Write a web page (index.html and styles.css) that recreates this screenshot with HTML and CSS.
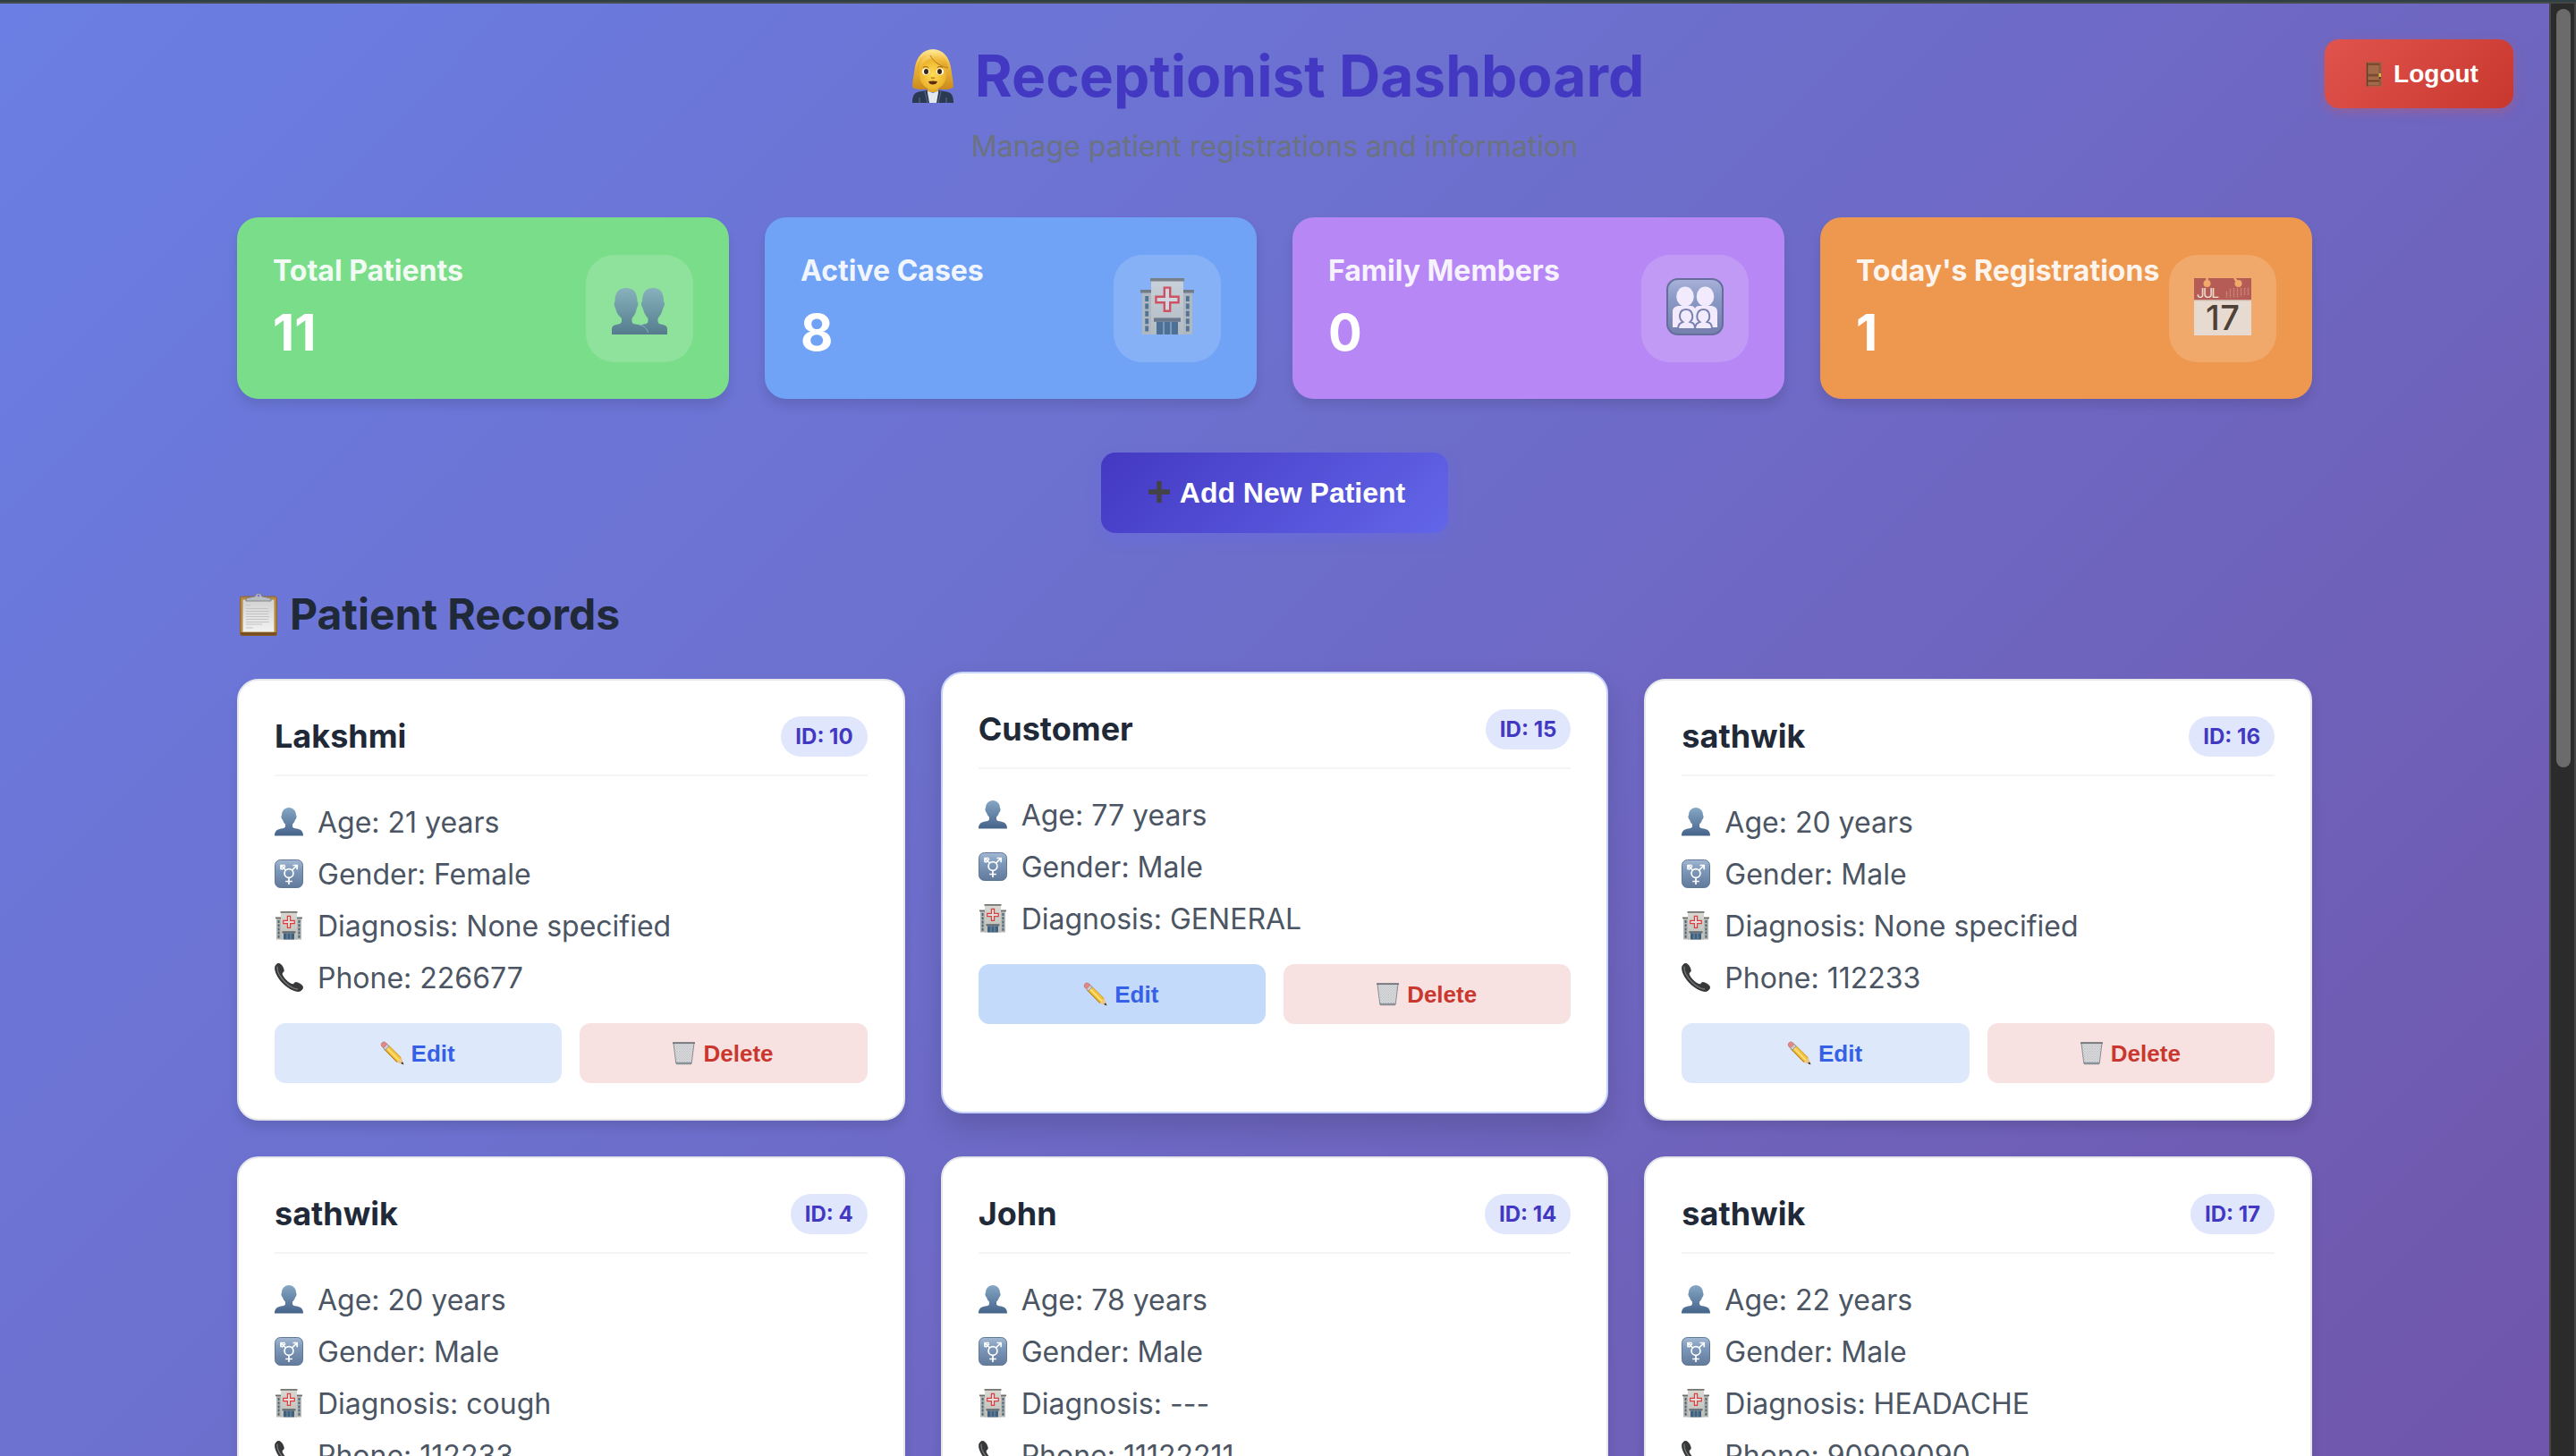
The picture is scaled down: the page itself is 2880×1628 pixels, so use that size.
FILE: index.html
```html
<!DOCTYPE html>
<html lang="en">
<head>
<meta charset="utf-8">
<title>Receptionist Dashboard</title>
<link rel="stylesheet" href="styles.css">
</head>
<body>
<svg class="sprite" aria-hidden="true">
  <defs>
    <linearGradient id="slate" x1="0" y1="0" x2="0" y2="1"><stop offset="0" stop-color="#86a7c5"/><stop offset="1" stop-color="#46638a"/></linearGradient>
    <linearGradient id="tile" x1="0" y1="0" x2="0" y2="1"><stop offset="0" stop-color="#a3b8d2"/><stop offset=".35" stop-color="#7f9abb"/><stop offset="1" stop-color="#62799a"/></linearGradient>
    <linearGradient id="wall" x1="0" y1="0" x2="0" y2="1"><stop offset="0" stop-color="#d9d9d4"/><stop offset="1" stop-color="#bdbdb8"/></linearGradient>
    <linearGradient id="hair" x1="0" y1="0" x2="0" y2="1"><stop offset="0" stop-color="#ffe794"/><stop offset=".4" stop-color="#efb93a"/><stop offset="1" stop-color="#c98a1c"/></linearGradient>
    <linearGradient id="paper" x1="0" y1="0" x2="0" y2="1"><stop offset="0" stop-color="#d2d2d2"/><stop offset="1" stop-color="#f2f2f2"/></linearGradient>
    <radialGradient id="skin"><stop offset="0" stop-color="#ffdc55"/><stop offset="1" stop-color="#edb32c"/></radialGradient>
    <pattern id="mesh" width="3" height="3" patternUnits="userSpaceOnUse"><path d="M0 0l3 3M3 0L0 3" stroke="#96989d" stroke-width=".5"/></pattern>
  </defs>
  <symbol id="person" viewBox="0 0 32 32">
    <path fill="url(#slate)" d="M16 0C20.700 0 24 3.600 24 8.500C24.600 9 24.800 10.200 24.300 11.500C24 12.700 23.600 13.300 23 13.600C22.400 16 21.200 17.600 20 18.600V21C20 22.800 22 23 25 23.600C29.500 24.500 32 26.500 32 31.500H0C0 26.500 2.500 24.500 7 23.600C10 23 12 22.800 12 21V18.600C10.800 17.600 9.600 16 9 13.600C8.400 13.300 8 12.700 7.700 11.500C7.200 10.200 7.400 9 8 8.500C8 3.600 11.300 0 16 0Z"/>
  </symbol>
  <symbol id="people" viewBox="0 0 62 52">
    <path fill="url(#slate)" d="M46 0C54 0 58 5 58 15C59.500 16 59.200 20 57.500 22C56 28 54 31 51.500 34V37C51.500 40 54 40.500 57 41C60.500 41.700 62 43 62 46V52H28V46C28 43 33 41 36 40.500C38 40 40.500 40 40.500 37V34C38 31 36 28 34.500 22C32.800 20 32.500 16 34 15C34 5 38 0 46 0Z"/>
    <path fill="url(#slate)" d="M16 0C24 0 28.500 5 28.500 15C30 16 29.700 20 28 22C27 28 25 31 22.500 34V37C22.500 40 25 40.500 30 41C36 42 40 46 40.500 52H0V46C0 43 1.500 41.700 5 41C8 40.500 11 40 11 37V34C8 31 5 28 4 22C2.300 20 2.500 16 3.500 15C3.500 5 8 0 16 0Z"/>
    <path d="M30 41C36 42 40 46 40.500 50" fill="none" stroke="#86a7c5"/>
  </symbol>
  <symbol id="gender" viewBox="0 0 32 32">
    <rect x=".5" y=".5" width="31" height="31" rx="6" fill="url(#tile)" stroke="#5f7898"/>
    <g fill="none" stroke="#fff" stroke-width="1.700"><circle cx="16" cy="15.500" r="4.900"/><path d="M16 20.400V28M12.200 24.500H19.800M19.500 12L25.200 6.500M20.500 6.500H25.200V11.200M12.500 12L7 6.500M7 11.200V6.500H11.700M8 11.500L12 7.500"/></g>
  </symbol>
  <symbol id="hospital" viewBox="0 0 32 32">
    <path fill="#b9b9b2" d="M2 7.500H9V31.500H2ZM23 7.500H30V31.500H23Z"/>
    <path fill="#6d6e6c" d="M1 6.500H9V8.200H1ZM23 6.500H31V8.200H23Z"/>
    <path fill="url(#wall)" d="M7 1.500H25V31.500H7Z"/>
    <path fill="#74756f" d="M6.500 0H25.500V1.800H6.500Z"/>
    <g stroke="#43647f" stroke-width="1.900" stroke-dasharray="3 1.200"><path d="M4.600 10V30.500M27.400 10V30.500"/></g>
    <path fill="#656b72" d="M8.500 22.200H23.500V24.400H8.500Z"/>
    <path fill="#3f617f" d="M10 24.400H22V31.500H10Z"/>
    <path d="M14 24.400V31.500M18 24.400V31.500" stroke="#8ba0b0" stroke-width=".8"/>
    <path fill="#e2dedc" stroke="#df3c3e" stroke-width="1.200" d="M14.400 5.300H17.600V10.400H22.300V13.600H17.600V18.400H14.400V13.600H9.700V10.400H14.400Z"/>
  </symbol>
  <symbol id="family" viewBox="0 0 64 64">
    <rect x="1" y="1" width="62" height="62" rx="12" fill="url(#tile)" stroke="#4d6285" stroke-width="2"/>
    <g fill="#fff"><ellipse cx="21" cy="20.500" rx="9.800" ry="11"/><ellipse cx="43.500" cy="20.500" rx="9.800" ry="11"/><path d="M7 55V38C7 33 10 31 15 31H27C30 31 31 32 32 34C33 32 34 31 37 31H49C54 31 57 33 57 38V55Z"/></g>
    <g fill="#fff" stroke="#667da0" stroke-width="2"><path d="M13 57C13 51 16 50 18.500 49C13 45 14 35 22 35C30 35 31 45 26.500 49C30 50 32 51 32 57Z"/><path d="M32 57C32 51 35 50 37.500 49C32 45 34 35 41.500 35C49 35 50 45 45.500 49C49 50 51 51 51 57Z"/></g>
    <path d="M12 58H52" stroke="#667da0" stroke-width="2.500"/>
  </symbol>
  <symbol id="phone" viewBox="0 0 32 32">
    <path fill="#37383a" stroke="#202123" stroke-width=".7" d="M5.500 .5C8 1.500 10 5 10.300 8.300C10.500 9.800 7.800 10.500 8.200 12C9.500 16.500 15.500 22.300 20 23.700C21.500 24.100 22 21.200 23.700 21.400C27 21.800 31 24 31.600 26.500C32 28.700 29.500 31.500 26.500 31.500C22 31.500 14.500 27.500 9.500 22.500C4 17 .5 10 .5 5.500C.5 2 3.500 -.3 5.500 .5Z"/>
    <path d="M3 3.500C2.500 9 6.500 16 11.500 21C16 25.500 22 28.700 26 29" fill="none" stroke="#77787a" stroke-width="1.300"/>
  </symbol>
  <symbol id="pencil" viewBox="0 0 28 28">
    <path fill="#f3c23c" d="M8.500 4L24.500 19.500L27 27L19.500 24.500L4 8.500Z"/>
    <path d="M6.500 6.500L22 22.500" stroke="#ffe27a" stroke-width="1.800"/><path d="M4.300 9L19.700 24.500" stroke="#b8801d" stroke-width="1.100"/><path d="M9 4.300L24.300 19.300" stroke="#c8902a" stroke-width=".9"/>
    <path fill="#ecc590" d="M24.500 19.500L27 27L19.500 24.500Z"/><path fill="#2c2a28" d="M26 24L27.500 27.500L24 26Z"/>
    <path fill="#c9ccd0" stroke="#7f858c" stroke-width=".7" d="M7 2.800L10.500 6L6 10.500L2.800 7Z"/>
    <path fill="#e58884" stroke="#b85e5c" stroke-width=".6" d="M2 6.300C-.5 3.500 3.500 -.8 6.300 1.800L8.200 3.500L3.700 8Z"/>
  </symbol>
  <symbol id="trash" viewBox="0 0 28 28">
    <path d="M2 2H26L23 26H5Z" fill="#e9eaec"/><path d="M2 2H26L23 26H5Z" fill="url(#mesh)" stroke="#85888d"/>
    <path d="M1 1.300H27V3.200H1Z" fill="#777a7f"/><path d="M4.800 24.500H23.200L22.800 27.300H5.200Z" fill="#8b9299"/>
  </symbol>
  <symbol id="door" viewBox="0 0 18 28">
    <rect x=".4" y=".4" width="17.200" height="27.200" fill="#8f5a3c" stroke="#b3604a" stroke-width=".8"/>
    <path fill="#a06a48" d="M2.500 4H14.500V13.500H2.500ZM2.500 17H14.500V20H2.500ZM2.500 23H14.500V26H2.500Z"/>
    <path d="M2.500 3H15M2.500 15H15M2.500 21.500H15M1.500 1V27.500" stroke="#633a25" stroke-width="1.200" fill="none"/>
    <rect x="14.500" y="13" width="2.500" height="4" fill="#dfb64c"/><rect x="15" y="17" width="1.500" height="2" fill="#4d3320"/>
  </symbol>
  <symbol id="clipboard" viewBox="0 0 42 48">
    <rect x=".5" y="4" width="41" height="43.500" rx="2" fill="#b58743" stroke="#8f6528"/><path fill="#7a5020" d="M1 44H41V47.500H1Z"/>
    <rect x="3.500" y="7.500" width="35" height="36" fill="url(#paper)"/>
    <path d="M7 13.500H12M7 17.500H32M7 20.500H33M7 23.500H32M7 26.500H33M7 29.500H32M7 32.500H33M7 35H25M7 39H15" stroke="#c4c4c4" stroke-width="1"/>
    <path fill="#b9bdc1" stroke="#73777c" stroke-width=".8" d="M7 9V6.500C10 4.500 15 5 17.500 3.500C18 -.5 24 -.5 24.500 3.500C27 5 32 4.500 35 6.500V9Z"/><circle cx="21" cy="3" r="1.300" fill="#777bce"/>
  </symbol>
  <symbol id="worker" viewBox="0 0 48 60">
    <path fill="url(#hair)" d="M24 0C35 0 43 9 44.500 23C45.500 31 47.500 38 46.500 43C42 45.500 34 45.500 29 44H19C14 45.500 6 45.500 1.500 43C.5 38 2.500 31 3.500 23C5 9 13 0 24 0Z"/>
    <path fill="#dfa729" d="M18 38H30V48H18Z"/>
    <path fill="#e3e8f0" d="M18 47L24 49L30 47L31 60H17Z"/>
    <path fill="#2b3a52" d="M17.500 46L20 60H1C1 52 3 48.500 9 47.500ZM30.500 46L28 60H47C47 52 45 48.500 39 47.500Z"/>
    <path d="M15 47L18 60M33 47L30 60M9 54V60M39 54V60" stroke="#53647f" stroke-width="1.200" fill="none"/>
    <ellipse cx="24" cy="28" rx="15" ry="17.500" fill="url(#skin)"/>
    <path fill="url(#hair)" d="M7 28C7 15 14 7 21 7C25 15 34 20 41 21C40 10 34 3 24 2C13 2 6 12 7 28Z"/>
    <path d="M21 7C25 15 34 20 41 21" fill="none" stroke="#b77a18"/>
    <path d="M13 20.500Q16 18.500 19 20.500M29 20.500Q32 18.500 35 20.500" fill="none" stroke="#a76f1b" stroke-width="1.200"/>
    <ellipse cx="16" cy="25" rx="4" ry="3.800" fill="#fff"/><ellipse cx="32" cy="25" rx="4" ry="3.800" fill="#fff"/>
    <ellipse cx="16.500" cy="25" rx="2.500" ry="3" fill="#3f2412"/><ellipse cx="31.500" cy="25" rx="2.500" ry="3" fill="#3f2412"/>
    <path d="M22 31.500Q24 33.500 26 31.500" fill="none" stroke="#bd8420" stroke-width="1.300"/>
    <path d="M19 36Q24 35 29 36Q28 39.500 24 39.500Q20 39.500 19 36Z" fill="#5d2a14"/>
  </symbol>
  <symbol id="plus" viewBox="0 0 24 24"><path fill="#434345" d="M9.300 0H14.700V9.300H24V14.700H14.700V24H9.300V14.700H0V9.300H9.300Z"/></symbol>
</svg>

<main class="page">
  <button class="logout"><svg><use href="#door"/></svg>Logout</button>
  <div class="container">
    <header class="header">
      <h1><svg><use href="#worker"/></svg>Receptionist Dashboard</h1>
      <p>Manage patient registrations and information</p>
    </header>

    <section class="stats">
      <div class="stat green"><div><h3>Total Patients</h3><p>11</p></div><span class="stat-icon"><svg class="i-people"><use href="#people"/></svg></span></div>
      <div class="stat blue"><div><h3>Active Cases</h3><p>8</p></div><span class="stat-icon"><svg><use href="#hospital"/></svg></span></div>
      <div class="stat purple"><div><h3>Family Members</h3><p>0</p></div><span class="stat-icon"><svg><use href="#family"/></svg></span></div>
      <div class="stat orange"><div><h3>Today's Registrations</h3><p>1</p></div><span class="stat-icon">
        <svg viewBox="0 0 64 64">
          <rect width="64" height="64" fill="#e6e8eb"/><rect width="64" height="24.500" fill="#a64a50"/>
          <path d="M0 25H64" stroke="#c8c8cc"/>
          <path d="M14.500 0V5M45 0L49 5" stroke="#f2b171" stroke-width="2.500"/>
          <circle cx="14.500" cy="6" r="4" fill="#f2ab6b"/><circle cx="49.500" cy="6" r="4" fill="#f2ab6b"/>
          <path d="M36.500 15V22M40.500 12V22M44.500 11V22M48.500 11V22M52.500 11V20M56.500 11V19M60.500 11V19" stroke="#c98587" stroke-width="1.500" stroke-dasharray="1.400 .7"/>
          <text class="cal-month" x="3" y="21.500" textLength="25">JUL</text>
          <text class="cal-day" x="13" y="57.500" textLength="38">17</text>
        </svg></span></div>
    </section>

    <button class="add"><svg><use href="#plus"/></svg>Add New Patient</button>

    <h2><svg><use href="#clipboard"/></svg>Patient Records</h2>

    <section class="cards">
      <article class="card">
        <div class="card-head"><h3>Lakshmi</h3><span class="id">ID: 10</span></div>
        <ul><li><svg><use href="#person"/></svg>Age: 21 years</li><li><svg><use href="#gender"/></svg>Gender: Female</li><li><svg><use href="#hospital"/></svg>Diagnosis: None specified</li><li><svg><use href="#phone"/></svg>Phone: 226677</li></ul>
        <div class="actions"><button class="edit"><svg><use href="#pencil"/></svg>Edit</button><button class="delete"><svg><use href="#trash"/></svg>Delete</button></div>
      </article>
      <article class="card hovered">
        <div class="card-head"><h3>Customer</h3><span class="id">ID: 15</span></div>
        <ul><li><svg><use href="#person"/></svg>Age: 77 years</li><li><svg><use href="#gender"/></svg>Gender: Male</li><li><svg><use href="#hospital"/></svg>Diagnosis: GENERAL</li></ul>
        <div class="actions"><button class="edit"><svg><use href="#pencil"/></svg>Edit</button><button class="delete"><svg><use href="#trash"/></svg>Delete</button></div>
      </article>
      <article class="card">
        <div class="card-head"><h3>sathwik</h3><span class="id">ID: 16</span></div>
        <ul><li><svg><use href="#person"/></svg>Age: 20 years</li><li><svg><use href="#gender"/></svg>Gender: Male</li><li><svg><use href="#hospital"/></svg>Diagnosis: None specified</li><li><svg><use href="#phone"/></svg>Phone: 112233</li></ul>
        <div class="actions"><button class="edit"><svg><use href="#pencil"/></svg>Edit</button><button class="delete"><svg><use href="#trash"/></svg>Delete</button></div>
      </article>
      <article class="card">
        <div class="card-head"><h3>sathwik</h3><span class="id">ID: 4</span></div>
        <ul><li><svg><use href="#person"/></svg>Age: 20 years</li><li><svg><use href="#gender"/></svg>Gender: Male</li><li><svg><use href="#hospital"/></svg>Diagnosis: cough</li><li><svg><use href="#phone"/></svg>Phone: 112233</li></ul>
      </article>
      <article class="card">
        <div class="card-head"><h3>John</h3><span class="id">ID: 14</span></div>
        <ul><li><svg><use href="#person"/></svg>Age: 78 years</li><li><svg><use href="#gender"/></svg>Gender: Male</li><li><svg><use href="#hospital"/></svg>Diagnosis: ---</li><li><svg><use href="#phone"/></svg>Phone: 11122211</li></ul>
      </article>
      <article class="card">
        <div class="card-head"><h3>sathwik</h3><span class="id">ID: 17</span></div>
        <ul><li><svg><use href="#person"/></svg>Age: 22 years</li><li><svg><use href="#gender"/></svg>Gender: Male</li><li><svg><use href="#hospital"/></svg>Diagnosis: HEADACHE</li><li><svg><use href="#phone"/></svg>Phone: 90909090</li></ul>
      </article>
    </section>
  </div>
</main>
<aside class="scrollbar"><div class="thumb"></div></aside>
</body>
</html>
```
FILE: styles.css
```css
* { box-sizing: border-box; margin: 0; padding: 0; }

body {
  display: flex;
  height: 1628px;
  overflow: hidden;
  border-top: 2px solid #2f4045;
  font-family: Inter, "Liberation Sans", sans-serif;
  color: #1f2937;
}

.sprite { position: absolute; width: 0; height: 0; }
svg { flex: none; display: block; }

.page {
  position: relative;
  flex: 1;
  height: 1626px;
  overflow: hidden;
  border-top: 2px solid #464b4c;
  background: linear-gradient(135deg, #6a7ee3 0%, #6d6fcd 42%, #7056ab 100%);
}

.container { width: 2320px; margin: 0 auto; padding-top: 40px; }

button {
  display: flex;
  align-items: center;
  justify-content: center;
  border: 0;
  font-family: "Liberation Sans", Arial, sans-serif;
  font-weight: 700;
}

.logout {
  position: absolute;
  top: 40px;
  right: 40px;
  width: 211px;
  height: 77px;
  gap: 13px;
  padding-left: 7px;
  border-radius: 16px;
  background: linear-gradient(135deg, #e0544d, #c8372e);
  box-shadow: 0 4px 12px rgba(224, 84, 77, .35);
  color: #fff;
  font-size: 28px;
}
.logout svg { width: 18px; height: 28px; }

.header { height: 199px; text-align: center; }
.header h1 {
  display: flex;
  justify-content: center;
  align-items: center;
  gap: 23px;
  padding-left: 7px;
  color: #4338c2;
  font-size: 64px;
  line-height: 82px;
  font-weight: 700;
}
.header h1 svg { width: 48px; height: 60px; }
.header p { margin-top: 18px; color: #6b7280; font-size: 32px; line-height: 39px; }

.stats { display: grid; grid-template-columns: repeat(4, 1fr); gap: 40px; }
.stat {
  display: flex;
  justify-content: space-between;
  align-items: center;
  height: 203px;
  padding: 0 40px;
  border-radius: 24px;
  box-shadow: 0 8px 12px rgba(0, 0, 0, .1);
  color: #fff;
}
.green { background: #7add8a; }
.blue { background: #70a2f5; }
.purple { background: #b687f5; }
.orange { background: #ee984f; }
.stat h3 { margin-bottom: 16px; font-size: 32px; line-height: 39px; font-weight: 700; opacity: .9; white-space: nowrap; }
.stat p { font-size: 56px; line-height: 68px; font-weight: 700; }
.stat-icon {
  display: flex;
  align-items: center;
  justify-content: center;
  flex: none;
  width: 120px;
  height: 120px;
  padding-bottom: 3px;
  border-radius: 32px;
  background: rgba(255, 255, 255, .16);
}
.stat-icon svg { width: 64px; height: 64px; opacity: .8; }
.stat-icon .i-people { width: 62px; height: 52px; margin-top: 10px; }
.cal-month { font-size: 15px; fill: #eee; }
.cal-day { font-size: 38px; font-weight: 500; fill: #27282c; }

.add {
  width: 388px;
  height: 90px;
  margin: 60px auto 0;
  gap: 11px;
  padding-left: 5px;
  border-radius: 16px;
  background: linear-gradient(135deg, #4338c2, #6366e9);
  box-shadow: 0 8px 16px rgba(99, 102, 241, .3);
  color: #fff;
  font-size: 32px;
}
.add svg { width: 24px; height: 24px; margin-bottom: 3px; }

h2 {
  display: flex;
  align-items: center;
  gap: 14px;
  margin: 62px 0 43px 3px;
  font-size: 48px;
  line-height: 58px;
  font-weight: 700;
}
h2 svg { width: 42px; height: 48px; }

.cards { display: grid; grid-template-columns: repeat(3, 1fr); grid-auto-rows: 494px; gap: 40px; }
.card {
  padding: 40px;
  border: 2px solid #e5e7eb;
  border-radius: 24px;
  background: #fff;
  box-shadow: 0 8px 12px rgba(0, 0, 0, .1);
}
.card.hovered {
  transform: translateY(-8px);
  border-color: #c7d2fa;
  box-shadow: 0 16px 32px rgba(0, 0, 0, .14);
}
.card-head {
  display: flex;
  align-items: center;
  justify-content: space-between;
  height: 67px;
  padding-bottom: 20px;
  border-bottom: 2px solid #f3f4f6;
}
.card-head h3 { margin-bottom: 2px; font-size: 36px; line-height: 44px; font-weight: 700; }
.id {
  padding: 8px 16px;
  border-radius: 24px;
  background: #e0e7fd;
  color: #4338c2;
  font-size: 24px;
  line-height: 29px;
  font-weight: 700;
}
.card ul { display: grid; gap: 16px; margin: 30px 0; list-style: none; }
.card li { display: flex; align-items: center; gap: 16px; height: 42px; color: #4b5563; font-size: 32px; }
.card li svg { width: 32px; height: 32px; margin-bottom: 1px; }

.actions { display: grid; grid-template-columns: 1fr 1fr; gap: 20px; }
.actions button { height: 67px; gap: 8px; padding: 2px 2px 0 0; border-radius: 12px; font-size: 26px; }
.actions svg { width: 27px; height: 27px; margin-bottom: 3px; }
.edit { background: #dde9fb; color: #3661e6; }
.hovered .edit { background: #c4dafa; }
.delete { background: #f8e2e1; color: #ca372e; }

.scrollbar {
  width: 30px;
  height: 1626px;
  padding: 4px 4px 0;
  border: solid #464646;
  border-width: 2px 2px 0;
  background: #2b2b2b;
}
.thumb { width: 16px; height: 848px; margin-left: 2px; margin-top: 2px; border-radius: 8px; background: #6b6b6b; }
```
